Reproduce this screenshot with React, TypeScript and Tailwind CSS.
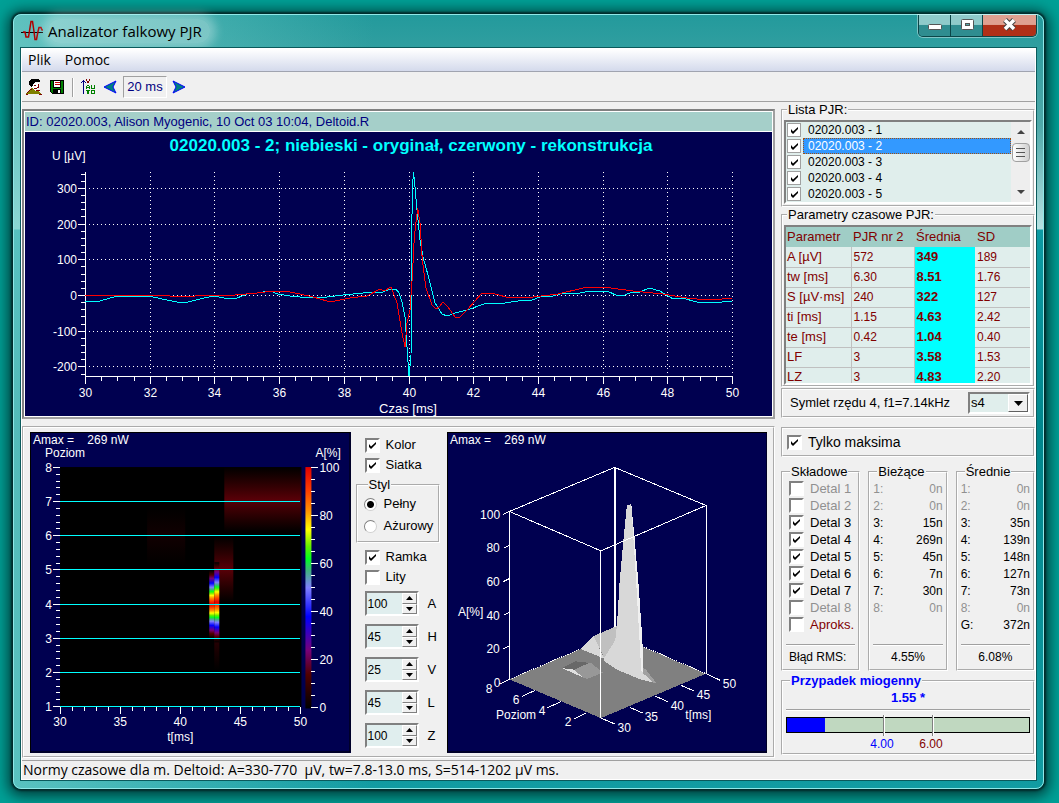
import { ReactNode, useState } from "react";

const ui = "font-['Liberation_Sans',sans-serif]";
const segoe = "font-['Open_Sans','Noto_Sans',sans-serif]";
const groove = "border-2 border-white [border-style:groove]";
const sunken =
  "border-2 border-t-[#808080] border-l-[#808080] border-b-white border-r-white";

const range = (n: number) => Array.from({ length: n }, (_, i) => i);

const units = [1, 2, 3, 4, 5];

const params = [
  ["A [µV]", "572", "349", "189"],
  ["tw [ms]", "6.30", "8.51", "1.76"],
  ["S [µV·ms]", "240", "322", "127"],
  ["ti [ms]", "1.15", "4.63", "2.42"],
  ["te [ms]", "0.42", "1.04", "0.40"],
  ["LF", "3", "3.58", "1.53"],
  ["LZ", "3", "4.83", "2.20"],
];

const details = [
  { name: "Detal 1", on: false, off: true },
  { name: "Detal 2", on: false, off: true },
  { name: "Detal 3", on: true },
  { name: "Detal 4", on: true },
  { name: "Detal 5", on: true },
  { name: "Detal 6", on: true },
  { name: "Detal 7", on: true },
  { name: "Detal 8", on: false, off: true },
];

const current = ["0n", "0n", "15n", "269n", "45n", "7n", "30n", "0n"];
const average = ["0n", "0n", "35n", "139n", "148n", "127n", "73n", "0n"];

const original =
  "85,302 100,301 117,296 143,296 153,297 167,300 177,302 188,302 200,299 213,296 230,299 237,298 247,294 257,293 270,291 278,294 290,296 300,297 327,297 343,295 363,293 383,292 390,289 396,289 399,293 402,302 405,317 407,347 409,376 411,357 411.7,240 412.3,190 413.5,172 415,187 417,210 420,240 423,257 428,275 435,303 442,314 447,316 455,313 467,310 487,303 505,303 518,301 532,300 540,297 553,296 563,293 580,293 590,291 607,291 618,296 625,295 632,292 640,292 649,288 660,291 673,299 682,298 697,302 722,302 732,301";
const rebuilt =
  "85,295 150,295 190,297 200,295 235,295 257,293 273,291 285,291 300,294 313,297 327,301 335,301 350,298 367,296 380,289 384,291 391,287 394,295 397,303 402,333 405,347 407,323 410,310 412.3,277 414.3,237 417.7,208 420,223 422.3,260 426,288 432,305 436,309 439,307 443,302 448,307 455,317 460,317 468,309 482,293 495,294 510,298 533,297 558,294 583,288 603,287 633,291 663,294 687,298 697,299 722,299 732,298";

interface CheckProps {
  label: ReactNode;
  on?: boolean;
  off?: boolean;
  flat?: boolean;
  className?: string;
}

function Check({ label, on, off, flat, className = "" }: CheckProps) {
  return (
    <label className={`flex items-center whitespace-nowrap ${className}`}>
      <span className="grid shrink-0">
        <input
          type="checkbox"
          defaultChecked={on}
          disabled={off}
          className={`peer col-start-1 row-start-1 appearance-none bg-white ${
            flat
              ? "h-[14px] w-[14px] border border-[#a0a0a0]"
              : `h-[15px] w-[15px] ${sunken}`
          }`}
        />
        <svg
          viewBox="0 0 9 9"
          className="pointer-events-none invisible col-start-1 row-start-1 h-[9px] w-[9px] place-self-center peer-checked:visible"
        >
          <path d="M1 3v3l2 2 5-5V1L3 5.500z" fill="#000" />
        </svg>
      </span>
      {label}
    </label>
  );
}

interface GroupProps {
  title: string;
  className?: string;
  titleClass?: string;
  children: ReactNode;
}

function Group({ title, className = "", titleClass = "", children }: GroupProps) {
  return (
    <fieldset className={`min-w-0 ${groove} ${className}`}>
      <legend className={`ml-1 px-px leading-4 ${titleClass}`}>{title}</legend>
      {children}
    </fieldset>
  );
}

function Rule() {
  return <div className="h-[2px] border-t border-[#a0a0a0] bg-white" />;
}

function TitleBar() {
  return (
    <header className="flex h-8 items-start justify-between">
      <div className="flex items-center pt-1 pl-px">
        <svg viewBox="0 0 22 22" className="mr-[5px] h-[22px] w-[22px]">
          <path d="M0 12.500h22" stroke="#000" />
          <path
            d="M2 12h2l1 5h2.500l1-6 1.500-9.500h1.500l1.500 10 1 8h1.500l1.500-8 1-4h2l1 2.500h1.500"
            fill="none"
            stroke="#b00000"
            strokeWidth="1.500"
          />
        </svg>
        <h1
          className={`${segoe} rounded-full bg-white/30 pr-2 text-[15px] leading-6 text-black shadow-[0_0_10px_6px_rgba(255,255,255,0.3)]`}
        >
          Analizator falkowy PJR
        </h1>
      </div>
      <div className="flex h-[22px] overflow-hidden rounded-b-[5px] border border-t-0 border-[#0b4648] ring-1 ring-white/40">
        <button
          aria-label="Minimalizuj"
          className="flex w-8 justify-center border-r border-[#0b4648] bg-linear-to-b from-[#8fcaca] from-45% to-[#2f8d90] to-50%"
        >
          <svg viewBox="0 0 14 22" className="h-[22px] w-[14px]">
            <rect x="0.500" y="9.500" width="13" height="5" rx="1" fill="#fff" stroke="#555" />
          </svg>
        </button>
        <button
          aria-label="Maksymalizuj"
          className="flex w-8 justify-center border-r border-[#0b4648] bg-linear-to-b from-[#8fcaca] from-45% to-[#2f8d90] to-50%"
        >
          <svg viewBox="0 0 14 22" className="h-[22px] w-[14px]">
            <rect x="1.500" y="4.500" width="12" height="10" rx="1" fill="#fff" stroke="#555" />
            <rect x="5.500" y="8.500" width="4" height="2" fill="#5aa" stroke="#555" />
          </svg>
        </button>
        <button
          aria-label="Zamknij"
          className="flex w-[53px] justify-center bg-linear-to-b from-[#dfa090] from-45% to-[#b03018] to-50%"
        >
          <svg viewBox="0 0 16 22" className="h-[22px] w-4">
            <path d="M3 5l9 9M12 5l-9 9" stroke="#444" strokeWidth="5.500" />
            <path d="M3 5l9 9M12 5l-9 9" stroke="#fff" strokeWidth="3.500" />
          </svg>
        </button>
      </div>
    </header>
  );
}

function Toolbar() {
  return (
    <div className="flex h-7 items-center pl-1 text-[#000080]">
      <button aria-label="Pacjent">
        <svg viewBox="0 0 16 16" className="h-4 w-4" shapeRendering="crispEdges">
          <path d="M6 4h7v4l-2 3H6z" fill="#fff" />
          <path d="M8 6h2M12 5v3h-1M8 9h3" stroke="#800000" fill="none" />
          <path d="M3 5V2l2-2h7l2 2v1H9L7 5v2L5 8z" fill="#000" />
          <path d="M0 15l3-4 3-2 4 3 3 0 2 3z" fill="#808000" />
          <path d="M1 14l3-3 2-1M0 15h2M13 15h3M10 11l4 0" stroke="#800000" fill="none" />
        </svg>
      </button>
      <button aria-label="Zapisz" className="ml-[7px]">
        <svg viewBox="0 0 16 16" className="h-4 w-4" shapeRendering="crispEdges">
          <path d="M1 1h14v14H3l-2-2z" fill="#000" />
          <path d="M2 2h2v7h8V2h2v12H3l-1-1z" fill="#008000" />
          <path d="M5 2h6v6H5z" fill="#fff" />
          <path d="M6 3h5v1H6zM6 5h5v1H6z" fill="#c00000" />
          <path d="M4 10h8v4H4z" fill="#000" />
          <path d="M9 11h2v3H9z" fill="#fff" />
        </svg>
      </button>
      <div className="ml-[7px] h-[19px] w-[2px] border-l border-[#a0a0a0] bg-white" />
      <button aria-label="Skala automatyczna" className="ml-[7px]">
        <svg viewBox="0 0 14 16" className="h-4 w-[14px]" shapeRendering="crispEdges">
          <path d="M2 1h1v14H2zM1 2h3v1H1zM0 3h1v1H0zM4 3h1v1H4z" fill="#000080" />
          <path d="M5 0h1v2H5zM8 0h1v2H8zM6 2h2v2H6z" fill="#800000" />
          <path
            d="M6 6h2v1H6zM5 7h1v3H5zM8 7h1v3H8zM6 8h2v1H6zM10 6h1v4h-1zM13 6h1v4h-1zM11 9h2v1h-2zM5 11h4v1H5zM6 12h2v3H6zM10 11h4v1h-4zM10 12h1v3h-1zM13 12h1v3h-1zM11 14h2v1h-2z"
            fill="#008000"
          />
        </svg>
      </button>
      <button aria-label="Wstecz" className="ml-2">
        <svg viewBox="0 0 14 14" className="h-[14px] w-[14px]">
          <path d="M1 7l12-6-3 6 3 6z" fill="#008080" stroke="#0000ff" />
        </svg>
      </button>
      <span className="ml-[6px] w-11 border border-t-[#a0a0a0] border-l-[#a0a0a0] border-b-white border-r-white text-center text-[13px] leading-5">
        20 ms
      </span>
      <button aria-label="Dalej" className="ml-[5px]">
        <svg viewBox="0 0 14 14" className="h-[14px] w-[14px]">
          <path d="M13 7L1 1l3 6-3 6z" fill="#008080" stroke="#0000ff" />
        </svg>
      </button>
    </div>
  );
}

// 32.35 px per ms, 35.7 px per 100 µV
function SignalChart() {
  const x = (t: number) => Math.round(85 + (t - 30) * 32.35) + 0.5;
  const y = (v: number) => Math.round(295 - v * 0.357) + 0.5;
  return (
    <svg viewBox="25 132 747 284" className="mt-px block w-full bg-[#000050]">
      <text
        x="411"
        y="151"
        fontSize="17"
        fontWeight="bold"
        fill="#0ff"
        textAnchor="middle"
      >
        02020.003 - 2; niebieski - oryginał, czerwony - rekonstrukcja
      </text>
      <g stroke="#fff" strokeDasharray="1 3" shapeRendering="crispEdges">
        {[300, 200, 100, 0, -100, -200].map((v) => (
          <path key={v} d={`M89 ${y(v)}H732`} />
        ))}
        {range(10).map((i) => (
          <path key={i} d={`M${x(32 + i * 2)} 172V376`} />
        ))}
      </g>
      <g stroke="#fff" shapeRendering="crispEdges">
        <path d="M85.500 172V376.500H732.500" fill="none" />
        {range(29).map((i) => {
          const v = 340 - i * 20;
          return <path key={v} d={`M${v % 100 ? 81 : 78} ${y(v)}H85`} />;
        })}
        {range(41).map((i) => (
          <path key={i} d={`M${x(30 + i / 2)} 376v${i % 4 ? 5 : 8}`} />
        ))}
      </g>
      <g fill="#fff" fontSize="12">
        <text x="52" y="160">
          U [µV]
        </text>
        {[300, 200, 100, 0, -100, -200].map((v) => (
          <text key={v} x="77" y={y(v) + 4} textAnchor="end">
            {v}
          </text>
        ))}
        {range(11).map((i) => (
          <text key={i} x={x(30 + i * 2)} y="397" textAnchor="middle">
            {30 + i * 2}
          </text>
        ))}
        <text x="408" y="413" fontSize="13" textAnchor="middle">
          Czas [ms]
        </text>
      </g>
      <g fill="none" shapeRendering="crispEdges">
        <polyline points={original} stroke="#0ff" />
        <polyline points={rebuilt} stroke="#f00" />
      </g>
    </svg>
  );
}

const hot: [number, string][] = [
  [0, "#e00000"],
  [10, "#ff4000"],
  [18, "#ff9000"],
  [26, "#ffff00"],
  [33, "#60f000"],
  [38, "#00ff20"],
  [43, "#40b080"],
  [50, "#8080ff"],
  [62, "#0000ff"],
  [76, "#780078"],
  [86, "#500000"],
  [100, "#000000"],
];

function SpectrumChart() {
  const y = (l: number) => Math.round(467 + (8 - l) * 34.15) + 0.5;
  return (
    <svg viewBox="30 432 320 320" className="block w-full bg-[#000050]">
      <defs>
        <linearGradient id="scale" x2="0" y2="1">
          {hot.map(([o, c]) => (
            <stop key={o} offset={`${o}%`} stopColor={c} />
          ))}
        </linearGradient>
        <linearGradient id="peak" x2="0" y2="1">
          {[...hot].reverse().map(([o, c]) => (
            <stop key={o} offset={`${50 - o / 2}%`} stopColor={c} />
          ))}
          {hot.map(([o, c]) => (
            <stop key={o} offset={`${50 + o / 2}%`} stopColor={c} />
          ))}
        </linearGradient>
        <linearGradient id="glow" x2="0" y2="1">
          <stop offset="0" stopColor="#500000" stopOpacity="0" />
          <stop offset="0.5" stopColor="#580008" />
          <stop offset="1" stopColor="#500000" stopOpacity="0" />
        </linearGradient>
      </defs>
      <rect x="30.500" y="432.500" width="319" height="319" fill="none" stroke="#000" />
      <rect x="60" y="467" width="241" height="240" fill="#000" />
      <rect x="224" y="467" width="77" height="65" fill="url(#glow)" />
      <rect x="147" y="506" width="38" height="60" fill="url(#glow)" opacity="0.2" />
      <rect x="214" y="536" width="19" height="66" fill="url(#glow)" />
      <rect x="214" y="604" width="5" height="66" fill="url(#glow)" opacity="0.5" />
      <rect x="209" y="570" width="5" height="68" fill="url(#peak)" />
      <rect x="214" y="562" width="5" height="80" fill="url(#peak)" />
      <rect x="305" y="467" width="6" height="241" fill="url(#scale)" />
      <g stroke="#0ff" shapeRendering="crispEdges">
        {range(7).map((i) => (
          <path key={i} d={`M60 ${y(i + 1)}H300`} />
        ))}
      </g>
      <g stroke="#fff" shapeRendering="crispEdges">
        {range(36).map((i) => (
          <path key={i} d={`M${i % 5 ? 56 : 53} ${y(1 + i / 5)}H60`} />
        ))}
        {range(21).map((i) => (
          <path key={i} d={`M${60.5 + i * 12} 707v${i % 5 ? 4 : 7}`} />
        ))}
        {range(21).map((i) => (
          <path key={i} d={`M311 ${707.5 - i * 12}h${i % 4 ? 4 : 7}`} />
        ))}
      </g>
      <g fill="#fff" fontSize="12">
        <text x="33" y="444" className="whitespace-pre">
          {"Amax =    269 nW"}
        </text>
        <text x="45" y="457">
          Poziom
        </text>
        <text x="315" y="457">
          A[%]
        </text>
        {range(8).map((i) => (
          <text key={i} x="52" y={y(i + 1) + 4} textAnchor="end">
            {i + 1}
          </text>
        ))}
        {range(5).map((i) => (
          <text key={i} x={60 + i * 60} y="726" textAnchor="middle">
            {30 + i * 5}
          </text>
        ))}
        {range(6).map((i) => (
          <text key={i} x="319" y={712 - i * 48}>
            {i * 20}
          </text>
        ))}
        <text x="180" y="741" textAnchor="middle">
          t[ms]
        </text>
      </g>
    </svg>
  );
}

const surfaceLabels: [number, number, string][] = [
  [490, 519, "100"],
  [493, 552, "80"],
  [493, 586, "60"],
  [493, 620, "40"],
  [493, 653, "20"],
  [497, 687, "0"],
  [489, 693, "8"],
  [516, 704, "6"],
  [542, 715, "4"],
  [568, 726, "2"],
  [624, 732, "30"],
  [651, 721, "35"],
  [677, 710, "40"],
  [703, 699, "45"],
  [729, 688, "50"],
];

function SurfaceChart() {
  return (
    <svg viewBox="447 432 320 320" className="block w-full bg-[#000050]">
      <rect x="447.500" y="432.500" width="319" height="319" fill="none" stroke="#000" />
      <g transform="translate(440 425) scale(0.33333)" shapeRendering="crispEdges">
        <path d="M208 762L523 628 797 745 482 878z" fill="#808080" />
        <g fill="none" stroke="#fff" strokeWidth="3">
          <path d="M523 127V620" strokeWidth="6" />
          <path d="M208 762L420 671M605 662L797 745" strokeDasharray="4 3" />
          <path d="M208 259L523 127 797 241V745M208 259V762" />
        </g>
        <path d="M422 671L460 632 492 700z" fill="#d8d8d8" />
        <path d="M460 632L530 602 528 650 492 698z" fill="#c0c0c0" />
        <path
          d="M560 240L547 370 538 470 530 600 525 645 492 697 490 706 530 733 600 762 637 771 607 730 604 640 592 480 578 300 573 237z"
          fill="#d8d8d8"
        />
        <path d="M573 237L583 340 595 480 606 640 610 740 603 738 587 460z" fill="#f0f0f0" />
        <path d="M607 728L617 733 648 773 637 771 607 742z" fill="#a0a0a0" />
        <path d="M365 728L405 708 450 713 402 733z" fill="#686868" />
        <path d="M365 728L402 733 430 757z" fill="#e0e0e0" />
        <path d="M402 733L450 711 488 742 440 761 428 756z" fill="#989898" />
        <g fill="none" stroke="#fff" strokeWidth="3">
          <path d="M208 259L482 377 797 241M482 377V878" />
          {[259, 360, 460, 561, 661, 762].map((v) => (
            <path key={v} d={`M208 ${v}l-18 9`} />
          ))}
          <path d="M208 762l-30 14M285 795l-40 18M362 829l-40 18M438 863l-38 18" />
          <path d="M482 878l43 18M569 846l38 17M645 812l39 18M722 780l40 17M797 745l43 20" />
        </g>
      </g>
      <g fill="#fff" fontSize="12">
        <text x="450" y="444" className="whitespace-pre">
          {"Amax =    269 nW"}
        </text>
        {surfaceLabels.map(([x, y, s], i) => (
          <text key={i} x={x} y={y} textAnchor="middle">
            {s}
          </text>
        ))}
        <text x="458" y="616">
          A[%]
        </text>
        <text x="496" y="719">
          Poziom
        </text>
        <text x="685" y="719">
          t[ms]
        </text>
      </g>
    </svg>
  );
}

function Spin({ name, start }: { name: string; start: number }) {
  const [value, setValue] = useState(start);
  const btn =
    "flex flex-1 w-full items-center justify-center bg-[#f0f0f0] border border-t-white border-l-white border-b-[#808080] border-r-[#808080]";
  return (
    <div className="flex h-[25px] items-center">
      <div className={`flex h-full w-[54px] ${sunken} bg-[#e0eeee]`}>
        <input
          id={`spin-${name}`}
          value={value}
          onChange={(e) => setValue(Number(e.target.value) || 0)}
          className="w-9 min-w-0 flex-1 pl-px text-xs outline-none"
        />
        <div className="flex w-[15px] flex-col">
          <button className={btn} aria-label={`${name} +`} onClick={() => setValue(value + 1)}>
            <svg viewBox="0 0 7 4" className="h-1 w-[7px]">
              <path d="M0 4h7L3.500 0z" />
            </svg>
          </button>
          <button className={btn} aria-label={`${name} -`} onClick={() => setValue(value - 1)}>
            <svg viewBox="0 0 7 4" className="h-1 w-[7px]">
              <path d="M0 0h7L3.500 4z" />
            </svg>
          </button>
        </div>
      </div>
      <label htmlFor={`spin-${name}`} className="ml-[9px]">
        {name}
      </label>
    </div>
  );
}

function Radio({ label, on }: { label: string; on?: boolean }) {
  return (
    <label className="flex h-[22px] items-center gap-[7px]">
      <input
        type="radio"
        name="styl"
        defaultChecked={on}
        className="h-[13px] w-[13px] appearance-none rounded-full border border-t-[#808080] border-l-[#808080] border-b-[#d0d0d0] border-r-[#d0d0d0] bg-white checked:bg-[radial-gradient(circle,#000_3px,#fff_4px)]"
      />
      {label}
    </label>
  );
}

function ChartOptions() {
  return (
    <div className="flex flex-col pl-[5px] pt-[3px]">
      <div className="pl-[9px]">
        <Check className="h-5 gap-[6px]" label="Kolor" on />
        <Check className="h-5 gap-[6px]" label="Siatka" on />
      </div>
      <Group title="Styl" className="mt-[2px] mr-[7px] pb-1 pl-[6px]">
        <Radio label="Pełny" on />
        <Radio label="Ażurowy" />
      </Group>
      <div className="pt-1 pl-[9px]">
        <Check className="h-5 gap-[6px]" label="Ramka" on />
        <Check className="h-5 gap-[6px]" label="Lity" />
      </div>
      <div className="flex flex-col gap-2 pt-1 pl-[9px]">
        <Spin name="A" start={100} />
        <Spin name="H" start={45} />
        <Spin name="V" start={25} />
        <Spin name="L" start={45} />
        <Spin name="Z" start={100} />
      </div>
    </div>
  );
}

function UnitList() {
  return (
    <Group title="Lista PJR:" className="pb-px">
      <div className={`mx-px mt-[2px] flex ${sunken} bg-[#e0eeec]`}>
        <ul className="flex-1 text-xs">
          {units.map((n) => (
            <li key={n}>
              <Check
                flat
                on
                className="h-4 pl-px"
                label={
                  <span
                    className={`ml-[2px] flex-1 pl-1 leading-[14px] border border-dotted ${
                      n === 2
                        ? "border-[#a05010] bg-[#3399ff] text-white"
                        : "border-transparent"
                    }`}
                  >
                    02020.003 - {n}
                  </span>
                }
              />
            </li>
          ))}
        </ul>
        <div className="flex w-[19px] flex-col items-center bg-[#eeeeee] pt-2 pb-2">
          <button aria-label="W górę">
            <svg viewBox="0 0 8 4" className="block h-1 w-2">
              <path d="M0 4h8L4 0z" fill="#444" />
            </svg>
          </button>
          <div className="mt-[9px] flex h-[19px] w-[18px] flex-col items-center justify-center gap-[3px] rounded-sm border border-[#a0a0a0] bg-linear-to-r from-white to-[#d0d0d0]">
            <i className="h-px w-[9px] bg-[#555]" />
            <i className="h-px w-[9px] bg-[#555]" />
            <i className="h-px w-[9px] bg-[#555]" />
          </div>
          <button aria-label="W dół" className="mt-auto">
            <svg viewBox="0 0 8 4" className="block h-1 w-2">
              <path d="M0 0h8L4 4z" fill="#444" />
            </svg>
          </button>
        </div>
      </div>
    </Group>
  );
}

function ParamTable() {
  const cell = "border-b border-[#c0c0c0] pl-[2px]";
  return (
    <Group title="Parametry czasowe PJR:">
      <div className={`mx-px mt-[2px] h-40 overflow-hidden ${sunken} bg-[#e0eeec] text-[#800000]`}>
        <table className="w-full table-fixed border-collapse text-left">
          <thead className="bg-[#a0cdc6]">
            <tr className="h-5">
              <th className="w-[65px] pl-px font-normal">Parametr</th>
              <th className="w-[63px] pl-[2px] font-normal whitespace-nowrap">PJR nr 2</th>
              <th className="w-[61px] pl-[2px] font-normal">Średnia</th>
              <th className="pl-[2px] font-normal">SD</th>
            </tr>
          </thead>
          <tbody>
            {params.map((p) => (
              <tr key={p[0]} className="h-5">
                <td className="border-r border-b border-[#c0c0c0] pl-px whitespace-nowrap">{p[0]}</td>
                <td className={`${cell} border-r text-xs`}>{p[1]}</td>
                <td className="bg-[#00ffff] pl-[2px] font-bold">{p[2]}</td>
                <td className={`${cell} text-xs`}>{p[3]}</td>
              </tr>
            ))}
          </tbody>
        </table>
      </div>
    </Group>
  );
}

function Column({ title, rows, total, rms }: { title: string; rows: string[]; total?: string; rms: string }) {
  return (
    <Group title={title} className="px-[3px]">
      {rows.map((v, i) => (
        <div
          key={i}
          className={`flex h-[17px] items-center justify-between text-xs ${
            v === "0n" ? "text-[#909090]" : ""
          }`}
        >
          <span>{i + 1}:</span>
          <span>{v}</span>
        </div>
      ))}
      <div className="mb-[11px] flex h-[17px] items-center justify-between text-xs">
        {total && (
          <>
            <span>G:</span>
            <span>{total}</span>
          </>
        )}
      </div>
      <Rule />
      <div className="pt-[3px] pb-1 text-center text-xs leading-4">{rms}</div>
    </Group>
  );
}

function Components() {
  return (
    <div className="mt-[7px] grid grid-cols-3 gap-2">
      <Group title="Składowe" className="px-[3px]">
        {details.map((d) => (
          <Check
            key={d.name}
            className={`h-[17px] gap-[6px] pl-[3px] ${d.off ? "text-[#909090]" : ""}`}
            label={d.name}
            on={d.on}
            off={d.off}
          />
        ))}
        <Check
          className="mb-[11px] h-[17px] gap-[6px] pl-[3px] text-[#800000]"
          label="Aproks."
        />
        <Rule />
        <div className="pt-[3px] pb-1 pl-[3px] text-xs leading-4 whitespace-nowrap">Błąd RMS:</div>
      </Group>
      <Column title="Bieżące" rows={current} rms="4.55%" />
      <Column title="Średnie" rows={average} total="372n" rms="6.08%" />
    </div>
  );
}

function CaseMeter() {
  const score = 1.55;
  return (
    <Group
      title="Przypadek miogenny"
      titleClass="font-bold text-[#0000ff]"
      className="mt-[2px] px-[3px] pb-px"
    >
      <div className="pt-px pb-[3px] text-center font-bold leading-4 text-[#0000ff]">
        {score} *
      </div>
      <Rule />
      <svg viewBox="0 0 244 38" className="mt-[3px] block w-full text-xs">
        <rect x="0.500" y="3.500" width="243" height="15" fill="#c0d8c0" stroke="#000" />
        <rect x="1" y="4" width={score * 24.5} height="14" fill="#0000ff" />
        <path d="M97.500 1v21M146.500 1v21" stroke="#808080" />
        <path d="M98.500 1v21M147.500 1v21" stroke="#fff" />
        <text x="96" y="34" textAnchor="middle" fill="#0000ff">
          4.00
        </text>
        <text x="145" y="34" textAnchor="middle" fill="#800000">
          6.00
        </text>
      </svg>
    </Group>
  );
}

export default function App() {
  return (
    <div className="flex min-h-screen bg-[#00a096] pt-[14px] pr-[15px] pb-[14px] pl-[13px]">
      <div className="flex min-w-0 flex-1 flex-col rounded-lg border border-[#8fe8e8] bg-[linear-gradient(90deg,rgba(120,210,205,0.7),transparent_35%),linear-gradient(180deg,#239a9c_0,#4fa9a9_110px,#b8e2e2_214px,#0d9ba3_215px,#00868c_420px,#129ca2_100%)] px-[6px] pb-[7px] shadow-[0_0_2px_2px_#002c2c,0_2px_14px_5px_#003c3a]">
        <TitleBar />
        <div className={`${ui} flex flex-1 flex-col border border-[#0a5a5c] text-[13px] leading-4 text-black`}>
          <div className="flex flex-1 flex-col border border-white bg-[#f0f0f0]">
            <nav
              className={`${segoe} flex h-[23px] items-center gap-[14px] border-b border-[#a0a4b0] bg-linear-to-b from-white to-[#d4daec] pl-[6px] text-sm`}
            >
              <button>Plik</button>
              <button>Pomoc</button>
            </nav>
            <div className="border-b border-[#a0a0a0] pt-px">
              <Toolbar />
            </div>
            <main className="flex gap-[6px]">
              <div className="flex min-w-0 flex-1 flex-col gap-[7px] pt-[7px]">
                <section className="border-2 border-t-[#808080] border-l-[#808080] border-r-[#a0a0a0] border-b-[#a0a0a0] bg-white p-px">
                  <h2 className="bg-[#a5cfc9] pl-px leading-[19px] text-[#000080]">
                    ID: 02020.003, Alison Myogenic, 10 Oct 03 10:04, Deltoid.R
                  </h2>
                  <SignalChart />
                </section>
                <section className={`grid grid-cols-[1fr_96px_1fr] items-start px-[6px] pt-1 pb-[3px] ${groove}`}>
                  <SpectrumChart />
                  <ChartOptions />
                  <SurfaceChart />
                </section>
              </div>
              <aside className="w-[254px] shrink-0">
                <UnitList />
                <ParamTable />
                <div className={`mt-px flex h-[30px] items-center justify-between pr-[3px] pl-[7px] ${groove}`}>
                  <label htmlFor="wavelet">Symlet rzędu 4, f1=7.14kHz</label>
                  <div className={`grid h-[22px] w-[62px] ${sunken} bg-[#e0eeec]`}>
                    <select
                      id="wavelet"
                      className="col-start-1 row-start-1 appearance-none pl-px outline-none"
                    >
                      <option>s4</option>
                    </select>
                    <span className="pointer-events-none col-start-1 row-start-1 flex w-5 items-center justify-center justify-self-end border border-t-white border-l-white border-b-[#606060] border-r-[#606060] bg-[#f0f0f0]">
                      <svg viewBox="0 0 9 5" className="h-[5px] w-[9px]">
                        <path d="M0 0h9L4.500 5z" />
                      </svg>
                    </span>
                  </div>
                </div>
                <div className={`mt-[9px] flex h-[30px] items-center pl-1 ${groove}`}>
                  <Check className="gap-[6px] text-sm" label="Tylko maksima" on />
                </div>
                <Components />
                <CaseMeter />
              </aside>
            </main>
            <footer
              className={`${segoe} mt-[2px] flex-1 border-t border-[#a0a0a0] pl-px text-sm leading-[18px] whitespace-pre`}
            >
              {"Normy czasowe dla m. Deltoid: A=330-770  µV, tw=7.8-13.0 ms, S=514-1202 µV ms."}
            </footer>
          </div>
        </div>
      </div>
    </div>
  );
}
